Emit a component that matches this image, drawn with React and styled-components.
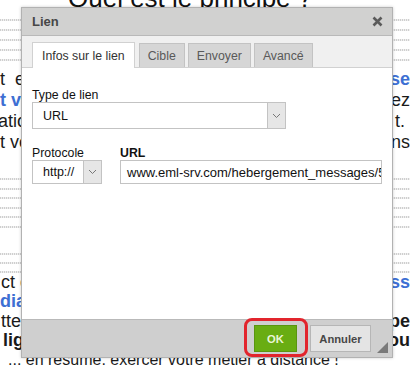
import React from 'react';
import styled, { createGlobalStyle, css } from 'styled-components';

const GlobalStyle = createGlobalStyle`
  html, body {
    margin: 0;
    padding: 0;
    background: #fff;
  }
  body {
    font-family: "Liberation Sans", Arial, sans-serif;
  }
`;

const Page = styled.div`
  position: relative;
  width: 410px;
  height: 365px;
  overflow: hidden;
  background: #fff;
  color: #1a1a1a;
`;

const Heading = styled.h1`
  margin: -15px 0 0;
  padding-left: 68px;
  font-size: 26px;
  line-height: 26px;
  font-weight: normal;
  color: #111;
  white-space: nowrap;
`;

const RuleGroup = styled.div`
  display: flex;
  flex-direction: column;
  gap: ${({ gap }) => gap}px;
  margin-top: ${({ top }) => top}px;
`;

const Rule = styled.div`
  height: 2px;
  background: repeating-linear-gradient(90deg, #cfcfcf 0 1px, #f0f0f0 1px 2px);
`;

const TextBlock = styled.div`
  margin-top: ${({ top }) => top}px;
  font-size: 18px;
  line-height: ${({ lh }) => lh}px;
`;

const Line = styled.div`
  display: flex;
  width: 410px;
  white-space: pre;
  font-size: ${({ size }) => size || 18}px;
`;

const fragStyle = css`
  color: ${({ blue }) => (blue ? '#3d6fd3' : '#1a1a1a')};
  font-weight: ${({ bold, blue }) => (bold || blue ? 'bold' : 'normal')};
`;

const LeftFrag = styled.span`
  ${fragStyle}
  margin-left: ${({ shift }) => shift || 0}px;
`;

const Spacer = styled.span`
  flex: 1;
`;

const RightFrag = styled.span`
  ${fragStyle}
  flex: 0 0 ${({ x }) => 410 - x}px;
`;

const Dialog = styled.div`
  position: absolute;
  left: 21px;
  top: 7px;
  width: 372px;
  height: 351px;
  box-sizing: border-box;
  border: 1px solid #b2b2b2;
  box-shadow: 0 0 3px rgba(0, 0, 0, 0.2);
  display: flex;
  flex-direction: column;
  background: #fff;
  font-family: "Liberation Sans", Arial, sans-serif;
`;

const TitleBar = styled.div`
  height: 27px;
  flex: 0 0 auto;
  display: flex;
  align-items: center;
  justify-content: space-between;
  padding: 0 9px 0 10px;
  background: #d1d1d0;
  border-bottom: 1px solid #b9b9b9;
`;

const Title = styled.span`
  font-size: 13px;
  font-weight: bold;
  color: #474747;
`;

const CloseButton = styled.button`
  width: 12px;
  height: 12px;
  padding: 0;
  border: none;
  background: transparent;
  display: flex;
  align-items: center;
  justify-content: center;
`;

const TabBar = styled.div`
  display: flex;
  align-items: flex-end;
  gap: 3px;
  padding: 6px 0 0 10px;
  background: #f0f0f0;
  flex: 0 0 auto;
`;

const Tab = styled.div`
  height: 24px;
  box-sizing: border-box;
  padding: 0 8px;
  display: flex;
  align-items: center;
  font-size: 12.3px;
  color: #595959;
  background: #d6d6d6;
  border: 1px solid #c3c3c3;
  border-bottom: none;
  ${({ active }) =>
    active &&
    css`
      height: 26px;
      margin-bottom: -1px;
      padding: 0 9px;
      margin-right: 1px;
      color: #333;
      background: #fff;
      border-color: #d1d1d1;
      position: relative;
      z-index: 1;
    `}
`;

const Body = styled.div`
  flex: 1;
  background: #fff;
  border-top: 1px solid #d1d1d1;
  padding: 20px 10px 0 10px;
  min-width: 0;
`;

const Field = styled.div`
  display: flex;
  flex-direction: column;
  min-width: 0;
  width: ${({ w }) => (w ? `${w}px` : 'auto')};
  flex: ${({ grow }) => (grow ? '1 1 0' : '0 0 auto')};
`;

const Label = styled.label`
  font-size: 12.3px;
  line-height: 14px;
  color: #111;
  font-weight: ${({ bold }) => (bold ? 'bold' : 'normal')};
`;

const Row = styled.div`
  display: flex;
  gap: 18px;
  margin-top: 17px;
`;

const SelectBox = styled.div`
  display: flex;
  box-sizing: border-box;
  width: ${({ w }) => w}px;
  height: ${({ h }) => h}px;
  border: 1px solid #c3c3c3;
  background: #fff;
`;

const SelectValue = styled.span`
  flex: 1;
  display: flex;
  align-items: center;
  padding-left: 10px;
  font-size: 12.5px;
  color: #111;
`;

const SelectArrow = styled.span`
  flex: 0 0 ${({ w }) => w || 16}px;
  display: flex;
  align-items: center;
  justify-content: center;
  background: #e6e6e6;
  border-left: 1px solid #c3c3c3;
`;

const TextInput = styled.div`
  box-sizing: border-box;
  height: 24px;
  border: 1px solid #c3c3c3;
  padding-left: 6px;
  display: flex;
  align-items: center;
  font-size: 13px;
  color: #111;
  white-space: nowrap;
  overflow: hidden;
`;

const Footer = styled.div`
  position: relative;
  height: 37px;
  flex: 0 0 auto;
  background: #cfcfcf;
  border-top: 1px solid #b9b9b9;
  display: flex;
  align-items: center;
  justify-content: flex-end;
  gap: 13px;
  padding-right: 21px;
`;

const Highlight = styled.span`
  position: relative;
  display: inline-flex;
  &::after {
    content: '';
    position: absolute;
    top: -7px;
    left: -10px;
    right: -11px;
    bottom: -5px;
    border: 3px solid #e2252d;
    border-radius: 8px;
    pointer-events: none;
  }
`;

const Button = styled.button`
  height: 27px;
  box-sizing: border-box;
  width: ${({ w }) => w}px;
  padding: 0;
  font-family: "Liberation Sans", Arial, sans-serif;
  font-size: 11.2px;
  font-weight: bold;
  border: 1px solid ${({ primary }) => (primary ? '#5a9510' : '#b6b6b6')};
  background: ${({ primary }) => (primary ? '#69ad12' : '#e4e4e4')};
  color: ${({ primary }) => (primary ? '#e9f6d6' : '#474747')};
`;

const ResizeGrip = styled.svg`
  position: absolute;
  right: 4px;
  bottom: 4px;
`;

const Chevron = () => (
  <svg width="9" height="6" viewBox="0 0 9 6">
    <path d="M1 1 L4.5 4.5 L8 1" fill="none" stroke="#777" strokeWidth="1" />
  </svg>
);

const upperLines = [
  { left: 't  e', right: 'se', rx: 394, rblue: true },
  { left: 't vo', lblue: true, right: 'ez', rx: 393 },
  { left: 'ation', shift: -2, right: 't.', rx: 395 },
  { left: 't vo', right: 'ns', rx: 394 },
];

const lowerLines = [
  { left: 'ct e', shift: 1, right: 'ss', rx: 395, rblue: true },
  { left: 'dia', shift: 0, lblue: true },
  { left: 'tte a', shift: 1, right: 'pe', rx: 393, rbold: true },
  { left: 'lig', shift: 3, lbold: true, right: 'ou', rx: 395, rbold: true },
];

const renderLine = (l, i) => (
  <Line key={i}>
    <LeftFrag shift={l.shift} blue={l.lblue} bold={l.lbold}>{l.left}</LeftFrag>
    <Spacer />
    {l.right && (
      <RightFrag x={l.rx} blue={l.rblue} bold={l.rbold}>{l.right}</RightFrag>
    )}
  </Line>
);

export default function App() {
  return (
    <>
      <GlobalStyle />
      <Page>
        <Heading>Quel est le principe ?</Heading>
        <RuleGroup top={8} gap={8}>
          <Rule /><Rule /><Rule /><Rule /><Rule />
        </RuleGroup>
        <TextBlock top={8} lh={21}>
          {upperLines.map(renderLine)}
        </TextBlock>
        <RuleGroup top={25} gap={7.5}>
          <Rule /><Rule /><Rule /><Rule /><Rule /><Rule />
        </RuleGroup>
        <RuleGroup top={25.5} gap={7}>
          <Rule /><Rule /><Rule />
        </RuleGroup>
        <TextBlock top={0} lh={19.25}>
          {lowerLines.map(renderLine)}
          <Line size={16}>
            <LeftFrag shift={8}>... en résumé: exercer votre métier à distance !</LeftFrag>
          </Line>
        </TextBlock>

        <Dialog>
          <TitleBar>
            <Title>Lien</Title>
            <CloseButton aria-label="Fermer">
              <svg width="11" height="11" viewBox="0 0 11 11">
                <path d="M1.5 1.5 L9.5 9.5 M9.5 1.5 L1.5 9.5" stroke="#5a5a5a" strokeWidth="2.6" />
              </svg>
            </CloseButton>
          </TitleBar>
          <TabBar>
            <Tab active>Infos sur le lien</Tab>
            <Tab>Cible</Tab>
            <Tab>Envoyer</Tab>
            <Tab>Avancé</Tab>
          </TabBar>
          <Body>
            <Field>
              <Label>Type de lien</Label>
              <SelectBox w={254} h={27}>
                <SelectValue>URL</SelectValue>
                <SelectArrow w={17}><Chevron /></SelectArrow>
              </SelectBox>
            </Field>
            <Row>
              <Field w={70}>
                <Label>Protocole</Label>
                <SelectBox w={70} h={24}>
                  <SelectValue>http://</SelectValue>
                  <SelectArrow w={17}><Chevron /></SelectArrow>
                </SelectBox>
              </Field>
              <Field grow>
                <Label bold>URL</Label>
                <TextInput>www.eml-srv.com/hebergement_messages/5ab4c2e9</TextInput>
              </Field>
            </Row>
          </Body>
          <Footer>
            <Highlight>
              <Button primary w={43}>OK</Button>
            </Highlight>
            <Button w={61}>Annuler</Button>
            <ResizeGrip width="11" height="11" viewBox="0 0 11 11">
              <path d="M11 0 L11 11 L0 11 Z" fill="#7a7a7a" />
            </ResizeGrip>
          </Footer>
        </Dialog>
      </Page>
    </>
  );
}
